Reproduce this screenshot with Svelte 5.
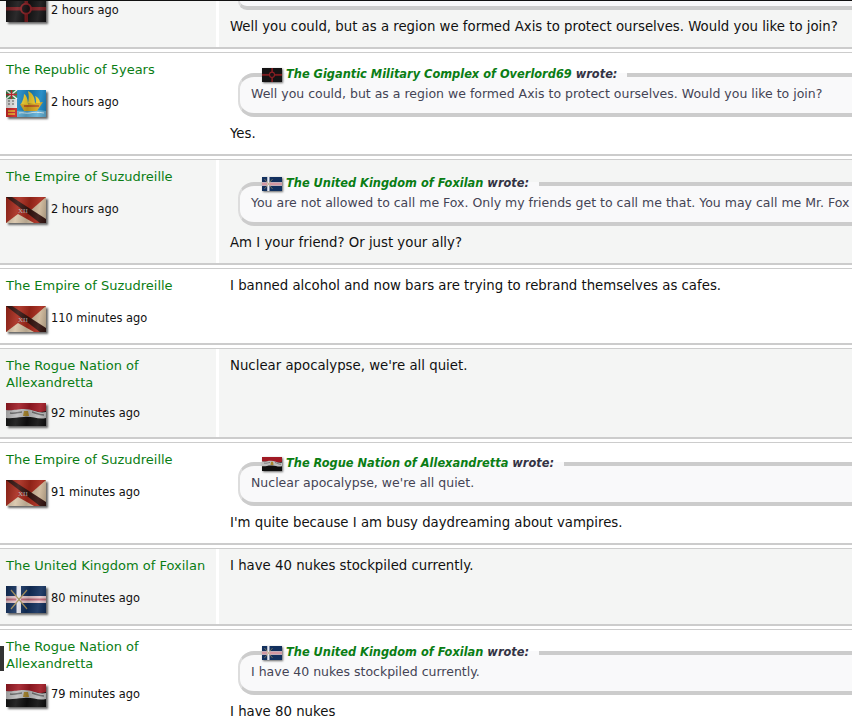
<script>
  const posts = [
    { name: 'The Republic of 5years', flag: 'spm', time: '2 hours ago', text: 'Yes.', top: 1, quote: { flag: 'overlord', name: 'The Gigantic Military Complex of Overlord69', text: 'Well you could, but as a region we formed Axis to protect ourselves. Would you like to join?' } },
    { name: 'The Empire of Suzudreille', flag: 'suz', time: '2 hours ago', text: 'Am I your friend? Or just your ally?', top: 3, quote: { flag: 'fox', name: 'The United Kingdom of Foxilan', text: 'You are not allowed to call me Fox. Only my friends get to call me that. You may call me Mr. Fox' } },
    { name: 'The Empire of Suzudreille', flag: 'suz', time: '110 minutes ago', text: 'I banned alcohol and now bars are trying to rebrand themselves as cafes.' },
    { name: 'The Rogue Nation of Allexandretta', flag: 'egypt', time: '92 minutes ago', text: "Nuclear apocalypse, we're all quiet." },
    { name: 'The Empire of Suzudreille', flag: 'suz', time: '91 minutes ago', text: "I'm quite because I am busy daydreaming about vampires.", quote: { flag: 'egypt', name: 'The Rogue Nation of Allexandretta', text: "Nuclear apocalypse, we're all quiet." } },
    { name: 'The United Kingdom of Foxilan', flag: 'fox', time: '80 minutes ago', text: 'I have 40 nukes stockpiled currently.' },
    { name: 'The Rogue Nation of Allexandretta', flag: 'egypt', time: '79 minutes ago', text: 'I have 80 nukes', top: 2, quote: { flag: 'fox', name: 'The United Kingdom of Foxilan', text: 'I have 40 nukes stockpiled currently.' } }
  ];
</script>

{#snippet flagArt(kind)}
  {#if kind === 'overlord'}
    <svg viewBox="0 0 40 26" preserveAspectRatio="none">
      <rect width="40" height="26" fill="#141314" />
      <rect y="11" width="40" height="3.5" fill="#7a1a1e" />
      <rect x="18.5" width="3.5" height="26" fill="#7a1a1e" />
      <circle cx="20" cy="12.7" r="5" fill="#1a1416" stroke="#8d2025" stroke-width="2" />
    </svg>
  {:else if kind === 'spm'}
    <svg viewBox="0 0 40 27" preserveAspectRatio="none">
      <rect width="40" height="27" fill="#1a86c4" />
      <path d="M11 21c5-1 8 1 14 0s10-1 15 0v6H11z" fill="#5fb0d8" />
      <path d="M13 23c4-1 7 1 11 0s8-1 14 0" stroke="#d8eef6" stroke-width="1" fill="none" />
      <path d="M14 14l4 7h13l6-9z" fill="#d9a81e" />
      <path d="M18 16h15" stroke="#b8401c" stroke-width="1.4" />
      <path d="M15 14c2-4 3-7 3-10 3 2 4 6 4 11zM22 13c1-4 1-8 0-12 5 2 7 7 7 13zM30 13c0-3 0-5-1-7 3 1 5 4 5 7z" fill="#f4d02c" />
      <rect width="11" height="9" fill="#2f8a4a" />
      <path d="M0 0l11 9M11 0L0 9" stroke="#fff" stroke-width="1.4" />
      <path d="M5.5 0v9M0 4.5h11" stroke="#c8202a" stroke-width="1.4" />
      <rect y="9" width="11" height="9" fill="#e6e6e6" />
      <path d="M2 11h2M6 11h2M2 14h2M6 14h2" stroke="#555" stroke-width="1" />
      <rect y="18" width="11" height="9" fill="#c92020" />
      <path d="M2 21h7M2 24h7" stroke="#e8b820" stroke-width="1.5" />
    </svg>
  {:else if kind === 'suz'}
    <svg viewBox="0 0 40 26" preserveAspectRatio="none">
      <rect width="40" height="26" fill="#a8281a" />
      <path d="M40 0v26L24 14z" fill="#cdb698" />
      <path d="M0 26l12-9 16 9z" fill="#d8c4a8" />
      <path d="M0 0h6l34 22v4h-6z" fill="#34130f" />
      <text x="12" y="16" class="xii">XII</text>
    </svg>
  {:else if kind === 'egypt'}
    <svg viewBox="0 0 40 23" preserveAspectRatio="none">
      <rect width="40" height="23" fill="#0f0f0f" />
      <path d="M0 0h40v8C30 11 26 6 16 7 9 8 5 7 0 8z" fill="#a01a24" />
      <path d="M0 7c7 1 10-1 18-1 9 0 14 5 22 3v6c-8 2-14-2-22-1-8 0-12 2-18 1z" fill="#bdbdbd" />
      <path d="M4 10c5 1 9-1 12-1M26 9c4 1 7 3 12 3" stroke="#6a6a6a" stroke-width="1.4" fill="none" />
      <path d="M18 8h4l1 5h-6z" fill="#a8862c" />
    </svg>
  {:else}
    <svg viewBox="0 0 40 27" preserveAspectRatio="none">
      <rect width="40" height="27" fill="#12305e" />
      <rect y="10" width="40" height="7" fill="#e8c8cc" />
      <rect y="12.5" width="40" height="2" fill="#c06a7a" />
      <rect x="10.5" width="4.5" height="27" fill="#e6e6ee" />
      <path d="M5 4l16 19M21 4L5 23" stroke="#a8925a" stroke-width="1.2" />
    </svg>
  {/if}
{/snippet}

<div class="page">
  <div class="tab"></div>

  <div class="post shade cut">
    <div class="side">
      <div class="meta">
        <span class="flag overlord">{@render flagArt('overlord')}</span>
        <span class="time">2 hours ago</span>
      </div>
    </div>
    <div class="body">
      <div class="stub"></div>
      <p class="msg">Well you could, but as a region we formed Axis to protect ourselves. Would you like to join?</p>
    </div>
  </div>

  {#each posts as post, i}
    <div class="post" class:shade={i % 2 === 1}>
      <div class="side">
        <a class="nation" href="#top">{post.name}</a>
        <div class="meta">
          <span class="flag {post.flag}">{@render flagArt(post.flag)}</span>
          <span class="time">{post.time}</span>
        </div>
      </div>
      <div class="body" style="padding-top: {8 + (post.top ?? 0)}px">
        {#if post.quote}
          <fieldset class="quote">
            <legend>
              <span class="miniflag">{@render flagArt(post.quote.flag)}</span>
              <a href="#top">{post.quote.name}</a> <span>wrote:</span>
            </legend>
            <p>{post.quote.text}</p>
          </fieldset>
        {/if}
        <p class="msg">{post.text}</p>
      </div>
    </div>
  {/each}
</div>

<style>
  :global(body) { margin: 0; background: #fff; }
  .page {
    position: relative;
    height: 720px;
    overflow: hidden;
    font-family: "DejaVu Sans", Verdana, sans-serif;
    font-size: 13.3px;
    line-height: 17px;
    color: #111;
    border-top: 1px solid #111;
    box-sizing: border-box;
  }
  .tab {
    position: absolute;
    left: 0;
    top: 645px;
    width: 4px;
    height: 25px;
    background: #333;
    z-index: 2;
  }
  .post {
    display: flex;
    border-top: 1px solid #ccc;
    border-bottom: 2px solid #ccc;
    margin-bottom: 3px;
    width: 900px;
  }
  .post.cut {
    border-top: 0;
    height: 46px;
  }
  .side {
    width: 216px;
    flex: none;
    box-sizing: border-box;
    padding: 8px 6px 11px;
  }
  .cut .side {
    display: flex;
    flex-direction: column;
    justify-content: flex-end;
    padding: 0 6px 25px;
  }
  .body {
    flex: 1;
    margin-left: 3px;
    padding: 8px 0 12px 11px;
  }
  .cut .body { padding-top: 0; }
  .shade .side, .shade .body { background: #f4f5f4; }
  .nation { display: block; color: #0a7d14; text-decoration: none; font-size: 13px; }
  .meta { display: flex; align-items: center; gap: 5px; margin-top: 12px; flex: none; }
  .cut .meta { margin-top: 0; }
  .flag { position: relative; display: block; width: 40px; height: 26px; box-shadow: 2px 2px 2px #666; flex: none; }
  .flag::after {
    content: "";
    position: absolute;
    inset: 0;
    background: linear-gradient(100deg, rgba(0,0,0,.22), rgba(255,255,255,.1) 30%, rgba(0,0,0,.16) 55%, rgba(255,255,255,.08) 80%, rgba(0,0,0,.2));
  }
  .flag.spm, .flag.fox { height: 27px; }
  .flag.egypt { height: 23px; }
  .flag svg, .miniflag svg { display: block; width: 100%; height: 100%; }
  .time { font-size: 11.4px; padding-bottom: 2px; }
  .cut .time { padding: 2px 0 0; }
  .xii { font-size: 7px; fill: #bbb; font-family: "Liberation Serif", serif; }
  .stub {
    height: 5px;
    margin: 0 0 8px 8px;
    border: solid #ccc;
    border-width: 0 0 4px 2px;
    border-left-color: #ddd;
    border-radius: 0 0 0 16px;
    background: #f9f9fa;
  }
  .quote {
    margin: 4px 0 8px 8px;
    padding: 2px 0 11px 11px;
    min-width: 0;
    border: solid #ccc;
    border-width: 4px 0 4px 2px;
    border-left-color: #ddd;
    border-radius: 16px 0 0 16px;
    background: #f9f9fa;
    color: #445;
    font-size: 12.5px;
  }
  .quote legend {
    display: flex;
    align-items: center;
    gap: 4px;
    margin-left: 11px;
    padding: 0 10px 0 0;
    font-size: 11.4px;
    font-weight: bold;
    font-style: italic;
    color: #334;
  }
  .quote legend a { color: #0a7d14; text-decoration: none; }
  .miniflag { display: block; width: 20px; height: 14px; box-shadow: 1px 1px 2px #666; }
  .quote p { margin: 0; }
  .msg { margin: 0; }
</style>
